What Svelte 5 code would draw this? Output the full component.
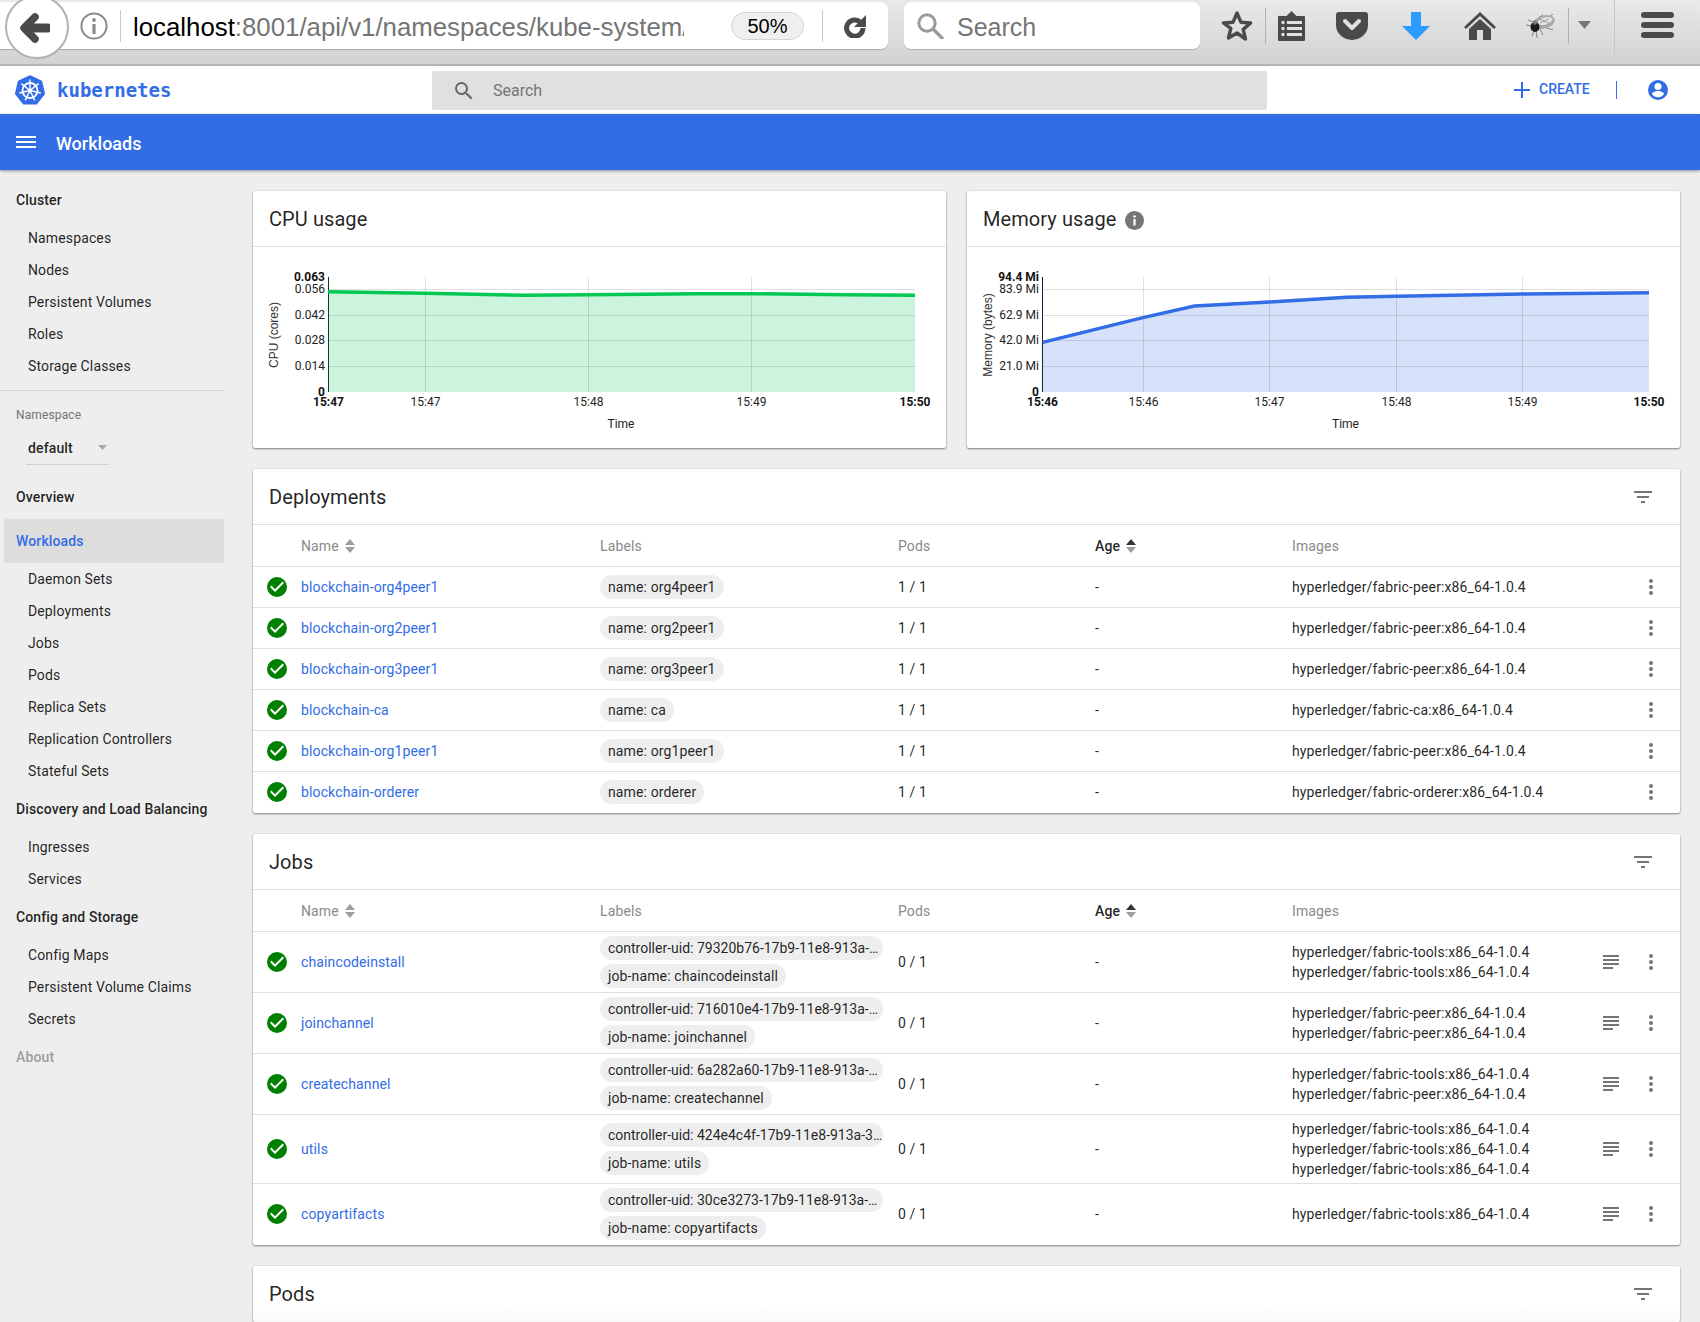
<script>
  const sideGroups = [
    { head: 'Cluster', items: ['Namespaces', 'Nodes', 'Persistent Volumes', 'Roles', 'Storage Classes'] },
  ];
  const sideGroups2 = [
    { head: 'Overview', items: [] },
    { head: 'Workloads', active: true, items: ['Daemon Sets', 'Deployments', 'Jobs', 'Pods', 'Replica Sets', 'Replication Controllers', 'Stateful Sets'] },
    { head: 'Discovery and Load Balancing', items: ['Ingresses', 'Services'] },
    { head: 'Config and Storage', items: ['Config Maps', 'Persistent Volume Claims', 'Secrets'] },
    { head: 'About', muted: true, items: [] },
  ];

  const deployments = [
    { name: 'blockchain-org4peer1', labels: ['name: org4peer1'], images: ['hyperledger/fabric-peer:x86_64-1.0.4'] },
    { name: 'blockchain-org2peer1', labels: ['name: org2peer1'], images: ['hyperledger/fabric-peer:x86_64-1.0.4'] },
    { name: 'blockchain-org3peer1', labels: ['name: org3peer1'], images: ['hyperledger/fabric-peer:x86_64-1.0.4'] },
    { name: 'blockchain-ca', labels: ['name: ca'], images: ['hyperledger/fabric-ca:x86_64-1.0.4'] },
    { name: 'blockchain-org1peer1', labels: ['name: org1peer1'], images: ['hyperledger/fabric-peer:x86_64-1.0.4'] },
    { name: 'blockchain-orderer', labels: ['name: orderer'], images: ['hyperledger/fabric-orderer:x86_64-1.0.4'] },
  ];
  const tools = 'hyperledger/fabric-tools:x86_64-1.0.4';
  const peer = 'hyperledger/fabric-peer:x86_64-1.0.4';
  const jobs = [
    { name: 'chaincodeinstall', labels: ['controller-uid: 79320b76-17b9-11e8-913a-0242ac110005', 'job-name: chaincodeinstall'], images: [tools, tools] },
    { name: 'joinchannel', labels: ['controller-uid: 716010e4-17b9-11e8-913a-0242ac110005', 'job-name: joinchannel'], images: [peer, peer] },
    { name: 'createchannel', labels: ['controller-uid: 6a282a60-17b9-11e8-913a-0242ac110005', 'job-name: createchannel'], images: [tools, peer] },
    { name: 'utils', labels: ['controller-uid: 424e4c4f-17b9-11e8-913a-3c2a0f110005', 'job-name: utils'], images: [tools, tools, tools] },
    { name: 'copyartifacts', labels: ['controller-uid: 30ce3273-17b9-11e8-913a-0242ac110005', 'job-name: copyartifacts'], images: [tools] },
  ];

  const cpu = {
    box: '253 247 693 201', w: 693, left: 328.5, right: 915, labelX: 325,
    color: '#00c853', fill: '#ccf3de', axisColor: '#0b3d20',
    yTitle: 'CPU (cores)', yTitleX: 278, timeX: 621,
    top: '0.063',
    yTicks: [[289, '0.056'], [315, '0.042'], [340, '0.028'], [366, '0.014']],
    xGrid: [[425.5, '15:47'], [588.5, '15:48'], [751.5, '15:49']],
    first: '15:47', last: '15:50',
    line: [[328, 291.7], [425.5, 293.3], [524.7, 295.3], [588.5, 294.7], [699, 293.7], [751.5, 293.7], [846, 294.7], [915, 295.3]],
  };
  const mem = {
    box: '967 247 713 201', w: 713, left: 1042.5, right: 1649, labelX: 1039,
    color: '#326de6', fill: '#d6e2f9', axisColor: '#14233f',
    yTitle: 'Memory (bytes)', yTitleX: 992, timeX: 1345.5,
    top: '94.4 Mi',
    yTicks: [[289, '83.9 Mi'], [315, '62.9 Mi'], [340, '42.0 Mi'], [366, '21.0 Mi']],
    xGrid: [[1143.5, '15:46'], [1269.5, '15:47'], [1396.5, '15:48'], [1522.5, '15:49']],
    first: '15:46', last: '15:50',
    line: [[1042.6, 342.3], [1143, 317.7], [1194.5, 306], [1269.6, 302], [1347, 297.3], [1396.5, 296.3], [1522.5, 294], [1649, 292.7]],
  };
  const pts = (c) => c.line.map((p) => p.join(',')).join(' ');
  const area = (c) => `${c.left},392 ${pts(c)} ${c.right},392`;

  const spokes = [0, 1, 2, 3, 4, 5, 6].map((i) => {
    const a = (i * 2 * Math.PI) / 7 - Math.PI / 2;
    return { x: 15 + Math.cos(a) * 11, y: 15.5 + Math.sin(a) * 11 };
  });
</script>

{#snippet sort(active)}
  <svg class="sort" viewBox="0 0 10 14" width="10" height="14">
    <path d="M5 0l5 6H0z" fill={active ? '#333' : '#9e9e9e'} />
    <path d="M5 14L0 8h10z" fill="#9e9e9e" />
  </svg>
{/snippet}

{#snippet filter()}
  <svg class="filter" viewBox="0 0 24 24" width="24" height="24"><path d="M10 18h4v-2h-4v2zM3 6v2h18V6H3zm3 7h12v-2H6v2z" fill="#757575" /></svg>
{/snippet}

{#snippet chart(c)}
  <svg class="chart" viewBox={c.box} width={c.w} height="201">
    <polygon points={area(c)} fill={c.fill} />
    {#each c.yTicks as t}
      <line x1={c.left} x2={c.right} y1={t[0] + 0.5} y2={t[0] + 0.5} stroke="#000" stroke-opacity="0.12" />
      <text class="tick" x={c.labelX} y={t[0] + 4} text-anchor="end">{t[1]}</text>
    {/each}
    {#each c.xGrid as t}
      <line x1={t[0]} x2={t[0]} y1="277" y2="392" stroke="#000" stroke-opacity="0.12" />
      <text class="tick" x={t[0]} y="406" text-anchor="middle">{t[1]}</text>
    {/each}
    <line x1={c.left} x2={c.left} y1="277" y2="392" stroke={c.axisColor} />
    <polyline points={pts(c)} fill="none" stroke={c.color} stroke-width="3.4" />
    <text class="tick bold" x={c.labelX} y="281" text-anchor="end">{c.top}</text>
    <text class="tick bold" x={c.labelX} y="396" text-anchor="end">0</text>
    <text class="tick bold" x={c.left} y="406" text-anchor="middle">{c.first}</text>
    <text class="tick bold" x={c.right} y="406" text-anchor="middle">{c.last}</text>
    <text class="tick" x={c.timeX} y="428" text-anchor="middle">Time</text>
    <text class="axis" transform={`translate(${c.yTitleX} 335) rotate(-90)`} text-anchor="middle">{c.yTitle}</text>
  </svg>
{/snippet}

{#snippet tableCard(title, rows, withLogs)}
  <section class="card table-card">
    <header class="card-head">
      <h2>{title}</h2>
      {@render filter()}
    </header>
    <div class="row thead">
      <span></span>
      <span class="th">Name {@render sort(false)}</span>
      <span class="th">Labels</span>
      <span class="th">Pods</span>
      <span class="th strong">Age {@render sort(true)}</span>
      <span class="th">Images</span>
    </div>
    {#each rows as r}
      <div class="row">
        <svg class="ok" viewBox="0 0 24 24" width="24" height="24"><path d="M12 2a10 10 0 1 0 0 20 10 10 0 0 0 0-20zm-2 15l-5-5 1.41-1.41L10 14.17l7.59-7.59L19 8l-9 9z" fill="#008000" /></svg>
        <a class="link" href="#top">{r.name}</a>
        <div class="chips">
          {#each r.labels as l}<span class="chip">{l}</span>{/each}
        </div>
        <span>{withLogs ? '0 / 1' : '1 / 1'}</span>
        <span>-</span>
        <div class="images">
          {#each r.images as i}<div>{i}</div>{/each}
        </div>
        <span class="act">
          {#if withLogs}
            <svg viewBox="0 0 24 24" width="24" height="24"><path d="M4 5h16v2H4zM4 9h16v2H4zM4 13h16v2H4zM4 17h10v2H4z" fill="#757575" /></svg>
          {/if}
        </span>
        <span class="act">
          <svg viewBox="0 0 24 24" width="24" height="24"><path d="M12 8a2 2 0 1 0 0-4 2 2 0 0 0 0 4zm0 2a2 2 0 1 0 0 4 2 2 0 0 0 0-4zm0 6a2 2 0 1 0 0 4 2 2 0 0 0 0-4z" fill="#757575" /></svg>
        </span>
      </div>
    {/each}
  </section>
{/snippet}

<div class="page">
  <div class="chrome">
    <div class="back">
      <svg viewBox="0 0 30 32" width="30" height="32">
        <path d="M15 5L4 16l11 11" fill="none" stroke="#4a4a4a" stroke-width="7.500" stroke-linecap="round" stroke-linejoin="round" />
        <path d="M7 16h21" stroke="#4a4a4a" stroke-width="9" stroke-linecap="round" fill="none" />
      </svg>
    </div>
    <div class="addr">
      <svg class="info" viewBox="0 0 28 28" width="28" height="28">
        <circle cx="14" cy="14" r="12.6" fill="none" stroke="#8a8a8a" stroke-width="2" />
        <circle cx="14" cy="8" r="1.9" fill="#8a8a8a" />
        <rect x="12.4" y="12" width="3.2" height="10" fill="#8a8a8a" />
      </svg>
      <i class="vr"></i>
      <div class="url"><b>localhost</b>:8001/api/v1/namespaces/kube-system/</div>
      <span class="zoom-pill">50%</span>
      <i class="vr vr2"></i>
      <svg class="reload" viewBox="0 0 24 24" width="24" height="24">
        <path d="M17.500 8.200A8.200 8.200 0 1 0 20 14" fill="none" stroke="#4a4a4a" stroke-width="5" />
        <path d="M23 1v12H11z" fill="#4a4a4a" />
      </svg>
    </div>
    <div class="ffsearch">
      <svg viewBox="0 0 30 26" width="30" height="26">
        <circle cx="11" cy="10" r="8.2" fill="none" stroke="#9b9b9b" stroke-width="3" />
        <path d="M17 16l9 9" stroke="#9b9b9b" stroke-width="3.4" stroke-linecap="round" />
      </svg>
      <span>Search</span>
    </div>
    <div class="tools">
      <svg class="t-star" viewBox="0 0 32 32" width="32" height="32"><path d="M16 3l3.900 9.200 9.700.8-7.400 6.400 2.300 9.600L16 23l-8.500 5 2.300-9.600L2.400 13l9.700-.8z" fill="none" stroke="#4a4a4a" stroke-width="3.4" stroke-linejoin="round" /></svg>
      <i class="tvr t-a"></i>
      <svg class="t-read" viewBox="0 0 27 30" width="27" height="30">
        <path d="M13.500 0l5 5H26a1 1 0 0 1 1 1v23a1 1 0 0 1-1 1H1a1 1 0 0 1-1-1V6a1 1 0 0 1 1-1h7.500z" fill="#4a4a4a" />
        <g fill="#e0e0e0"><rect x="9" y="10" width="15" height="3" /><rect x="9" y="16" width="15" height="3" /><rect x="9" y="22" width="15" height="3" /><circle cx="5" cy="11.500" r="1.700" /><circle cx="5" cy="17.500" r="1.700" /><circle cx="5" cy="23.500" r="1.700" /></g>
      </svg>
      <svg class="t-pocket" viewBox="0 0 32 28" width="32" height="28">
        <path d="M3 0h26a3 3 0 0 1 3 3v10a16 15 0 0 1-32 0V3a3 3 0 0 1 3-3z" fill="#4a4a4a" />
        <path d="M9 9l7 7 7-7" fill="none" stroke="#e0e0e0" stroke-width="4" stroke-linecap="round" stroke-linejoin="round" />
      </svg>
      <svg class="t-down" viewBox="0 0 28 28" width="28" height="28"><path d="M9 1a1 1 0 0 1 1-1h8a1 1 0 0 1 1 1v13h9L14 28 0 14h9z" fill="#2e9bff" /></svg>
      <svg class="t-home" viewBox="0 0 32 28" width="32" height="28">
        <path d="M16 0L0 15l2 2L16 4l14 13 2-2z" fill="#4a4a4a" />
        <path d="M16 7L5 17v11h8V18h6v10h8V17z" fill="#4a4a4a" />
      </svg>
      <svg class="t-bug" viewBox="0 0 30 24" width="30" height="24">
        <g stroke="#6a6a6a" stroke-width="0.8" fill="none">
          <path d="M6 12L0 11M7 8L2 6M10 16l1 8M14 15l3 6M18 13l9 3M8 17l-2 5M12 4l5-3M23 3l4-3" />
        </g>
        <ellipse cx="18" cy="8" rx="11" ry="6.500" transform="rotate(-15 18 8)" fill="#a9a9a9" />
        <ellipse cx="19" cy="7" rx="7.500" ry="3.500" transform="rotate(-15 19 7)" fill="#e2e2e2" />
        <path d="M13 5l10 4M14 9l9-4" stroke="#888" stroke-width="0.7" />
        <ellipse cx="9" cy="13" rx="4.500" ry="5" fill="#1c1c1c" />
        <circle cx="9" cy="8.500" r="2.200" fill="#777" />
      </svg>
      <i class="tvr t-b"></i>
      <svg class="t-tri" viewBox="0 0 13 8" width="13" height="8"><path d="M0 0h13l-6.500 8z" fill="#777" /></svg>
      <i class="tvr t-c"></i>
      <svg class="t-ham" viewBox="0 0 33 26" width="33" height="26"><g fill="#4a4a4a"><rect width="33" height="6" rx="3" /><rect y="10" width="33" height="6" rx="3" /><rect y="20" width="33" height="6" rx="3" /></g></svg>
    </div>
  </div>

  <div class="toolbar">
    <div class="brand">
      <svg viewBox="0 0 30 30" width="30" height="30">
        <polygon points="15,1 26.500,6.500 29.300,18.800 21.400,28.800 8.600,28.800 0.700,18.800 3.500,6.500" fill="#326de6" stroke="#326de6" stroke-width="1.500" stroke-linejoin="round" />
        <circle cx="15" cy="15.500" r="7.500" fill="none" stroke="#fff" stroke-width="1.800" />
        {#each spokes as s}<line x1="15" y1="15.500" x2={s.x} y2={s.y} stroke="#fff" stroke-width="1.400" />{/each}
        <circle cx="15" cy="15.500" r="2" fill="#fff" />
      </svg>
      <span class="wordmark">kubernetes</span>
    </div>
    <div class="search">
      <svg viewBox="0 0 24 24" width="24" height="24"><path d="M15.500 14h-.79l-.28-.27A6.470 6.470 0 0 0 16 9.500 6.500 6.500 0 1 0 9.500 16c1.610 0 3.090-.59 4.230-1.570l.27.28v.79l5 4.990L20.490 19l-4.990-5zm-6 0C7.010 14 5 11.990 5 9.500S7.010 5 9.500 5 14 7.010 14 9.500 11.990 14 9.500 14z" fill="#666" /></svg>
      <span>Search</span>
    </div>
    <div class="actions">
      <svg viewBox="0 0 16 16" width="16" height="16"><path d="M7 0h2v7h7v2H9v7H7V9H0V7h7z" fill="#326de6" /></svg>
      <span class="create">CREATE</span>
      <i class="act-vr"></i>
      <svg viewBox="0 0 24 24" width="24" height="24"><path d="M12 2a10 10 0 1 0 0 20 10 10 0 0 0 0-20zm0 3a3.500 3.500 0 1 1 0 7 3.500 3.500 0 0 1 0-7zm0 14.200a7.200 7.200 0 0 1-6-3.220c.03-2 4-3.080 6-3.080s5.970 1.090 6 3.080a7.200 7.200 0 0 1-6 3.220z" fill="#326de6" /></svg>
    </div>
  </div>

  <div class="titlebar">
    <svg viewBox="0 0 20 12" width="20" height="12"><path d="M0 0h20v2H0zM0 5h20v2H0zM0 10h20v2H0z" fill="#fff" /></svg>
    <span>Workloads</span>
  </div>

  <div class="main">
    <nav class="side">
      {#each sideGroups as g}
        <div class="head">{g.head}</div>
        {#each g.items as it}<div class="item">{it}</div>{/each}
      {/each}
      <hr />
      <div class="ns">
        <div class="ns-label">Namespace</div>
        <div class="ns-select">
          <span>default</span>
          <svg viewBox="0 0 9 5" width="9" height="5"><path d="M0 0h9L4.500 5z" fill="#a8a8a8" /></svg>
        </div>
      </div>
      {#each sideGroups2 as g}
        <div class="head" class:active={g.active} class:muted={g.muted}>{g.head}</div>
        {#each g.items as it}<div class="item">{it}</div>{/each}
      {/each}
    </nav>

    <div class="content">
      <div class="charts">
        <section class="card">
          <header class="card-head"><h2>CPU usage</h2></header>
          {@render chart(cpu)}
        </section>
        <section class="card">
          <header class="card-head">
            <h2>Memory usage</h2>
            <svg class="minfo" viewBox="0 0 19 19" width="19" height="19">
              <circle cx="9.500" cy="9.500" r="9.500" fill="#757575" />
              <circle cx="9.500" cy="5.500" r="1.300" fill="#fff" />
              <rect x="8.400" y="8" width="2.200" height="6.500" fill="#fff" />
            </svg>
          </header>
          {@render chart(mem)}
        </section>
      </div>

      {@render tableCard('Deployments', deployments, false)}
      {@render tableCard('Jobs', jobs, true)}

      <section class="card pods">
        <header class="card-head">
          <h2>Pods</h2>
          {@render filter()}
        </header>
      </section>
    </div>
  </div>
</div>

<style>
  :global(body) {
    margin: 0;
    background: #eee;
  }
  .page {
    height: 1322px;
    overflow: hidden;
    display: flex;
    flex-direction: column;
    font-family: Roboto, 'Liberation Sans', sans-serif;
    font-size: 14px;
    letter-spacing: 0.13px;
    color: rgba(0, 0, 0, 0.87);
    background: #eee;
  }

  /* browser chrome */
  .chrome {
    position: relative;
    flex: none;
    height: 64px;
    box-sizing: content-box;
    border-bottom: 2px solid #b4b4b4;
    background: linear-gradient(#e9e9e9, #d2d2d2);
    display: flex;
    align-items: flex-start;
    padding: 0;
    font-family: 'Liberation Sans', sans-serif;
    letter-spacing: 0;
  }
  .back {
    position: absolute;
    left: 5px;
    top: -5px;
    width: 58px;
    height: 58px;
    border: 2px solid #b2b2b2;
    border-radius: 50%;
    background: #fff;
    z-index: 1;
    display: flex;
    align-items: center;
    justify-content: center;
    padding-top: 2px;
    padding-right: 2px;
    box-sizing: content-box;
  }
  .back svg {
    margin-left: -2px;
  }
  .addr {
    margin-top: 2px;
    width: 888px;
    height: 48px;
    box-sizing: border-box;
    background: #fff;
    border-bottom: 1px solid #a9a9a9;
    border-radius: 0 7px 7px 0;
    display: flex;
    align-items: center;
    padding-left: 80px;
  }
  .info {
    flex: none;
  }
  .vr {
    flex: none;
    width: 1px;
    height: 32px;
    margin: 0 12px;
    background: #c8c8c8;
  }
  .url {
    flex: none;
    width: 551px;
    overflow: hidden;
    white-space: nowrap;
    font-size: 25.8px;
    padding-top: 3px;
    color: #757575;
  }
  .url b {
    font-weight: 400;
    color: #000;
  }
  .zoom-pill {
    flex: none;
    margin-left: 47px;
    width: 73px;
    height: 28px;
    box-sizing: border-box;
    border: 1px solid #d4d4d4;
    border-radius: 14px;
    background: #efefef;
    font-size: 20px;
    color: #000;
    text-align: center;
    line-height: 26px;
  }
  .vr2 {
    margin: 0 0 0 18px;
  }
  .reload {
    flex: none;
    margin-left: 20px;
  }
  .ffsearch {
    margin: 2px 0 0 16px;
    width: 296px;
    height: 48px;
    box-sizing: border-box;
    background: #fff;
    border-bottom: 1px solid #b0b0b0;
    border-radius: 7px;
    display: flex;
    align-items: center;
    padding-left: 12px;
    gap: 11px;
    font-size: 25px;
    color: #757575;
  }
  .ffsearch span {
    padding-top: 3px;
  }
  .tools {
    margin-top: 2px;
    height: 48px;
    display: flex;
    align-items: center;
  }
  .tools svg,
  .tools i {
    flex: none;
  }
  .tvr {
    width: 1px;
    height: 36px;
    background: #b0b0b0;
  }
  .t-star { margin-left: 21px; }
  .t-a { margin-left: 12px; }
  .t-read { margin-left: 12px; }
  .t-pocket { margin-left: 31px; }
  .t-down { margin-left: 34px; }
  .t-home { margin-left: 34px; }
  .t-bug { margin-left: 30px; }
  .t-b { margin-left: 12px; }
  .t-tri { margin-left: 9px; margin-top: -2px; }
  .t-c {
    margin-left: 23px;
    height: 64px;
    margin-top: 12px;
    margin-bottom: -2px;
    align-self: center;
    background: #c6c6c6;
    position: relative;
    top: -7px;
  }
  .t-ham { margin-left: 26px; margin-top: -2px; }

  /* app toolbar */
  .toolbar {
    flex: none;
    height: 48px;
    background: #fff;
    display: flex;
    align-items: center;
  }
  .brand {
    width: 432px;
    display: flex;
    align-items: center;
    padding-left: 15px;
    box-sizing: border-box;
    gap: 12px;
  }
  .wordmark {
    font-family: 'DejaVu Sans Mono', monospace;
    font-weight: 700;
    font-size: 19px;
    letter-spacing: 0;
    color: #326de6;
  }
  .search {
    width: 835px;
    height: 39px;
    margin-top: 1px;
    background: #e0e0e0;
    border-radius: 2px;
    display: flex;
    align-items: center;
    padding-left: 20px;
    box-sizing: border-box;
    gap: 17px;
    font-size: 16px;
    letter-spacing: 0;
    color: #757575;
  }
  .actions {
    margin-left: auto;
    padding-right: 30px;
    display: flex;
    align-items: center;
  }
  .create {
    margin-left: 9px;
    color: #326de6;
    font-weight: 500;
    font-size: 14px;
    letter-spacing: 0;
    width: 52px;
    position: relative;
    top: -1px;
  }
  .act-vr {
    width: 1px;
    height: 18px;
    background: #326de6;
    margin: 0 29px 0 25px;
  }

  .titlebar {
    flex: none;
    height: 56px;
    box-sizing: border-box;
    padding-top: 2px;
    background: #326de6;
    box-shadow: 0 1px 3px rgba(0, 0, 0, 0.4);
    display: flex;
    align-items: center;
    padding-left: 16px;
    gap: 20px;
    color: #fff;
    font-size: 18px;
    font-weight: 500;
    letter-spacing: 0;
    position: relative;
    z-index: 2;
  }
  .titlebar svg {
    margin-top: -2px;
  }

  .main {
    flex: 1;
    display: flex;
    min-height: 0;
  }

  /* sidebar */
  .side {
    flex: none;
    width: 224px;
    box-sizing: border-box;
    padding-top: 8px;
    background: #eee;
  }
  .head {
    height: 44px;
    line-height: 44px;
    padding-left: 16px;
    font-weight: 500;
  }
  .head.active {
    margin-left: 4px;
    padding-left: 12px;
    background: #ddd;
    border-radius: 2px;
    color: #326de6;
  }
  .head.muted {
    color: #9e9e9e;
  }
  .item {
    height: 32px;
    line-height: 32px;
    padding-left: 28px;
  }
  hr {
    margin: 8px 0 0;
    border: 0;
    border-top: 1px solid #d4d4d4;
  }
  .ns {
    height: 84px;
    box-sizing: border-box;
    padding-top: 16px;
  }
  .ns-label {
    padding-left: 16px;
    font-size: 12px;
    line-height: 16px;
    color: #757575;
  }
  .ns-select {
    margin: 8px 0 0 26px;
    width: 83px;
    height: 34px;
    box-sizing: border-box;
    padding: 0 2px;
    border-bottom: 1px solid #d0d0d0;
    display: flex;
    align-items: center;
    justify-content: space-between;
    font-weight: 500;
  }

  /* content */
  .content {
    flex: 1;
    min-width: 0;
    box-sizing: border-box;
    padding: 21px 20px 0 29px;
    display: flex;
    flex-direction: column;
    gap: 20px;
  }
  .charts {
    display: grid;
    grid-template-columns: 693px 713px;
    gap: 21px;
    margin-bottom: 1px;
  }
  .card {
    background: #fff;
    border-radius: 2px;
    box-shadow: 0 1px 2px rgba(0, 0, 0, 0.45), 0 0 2px rgba(0, 0, 0, 0.12);
  }
  .table-card {
    padding-bottom: 1px;
    margin-bottom: 1px;
  }
  .card-head {
    height: 55px;
    box-sizing: content-box;
    border-bottom: 1px solid #e0e0e0;
    padding: 0 25px 0 16px;
    display: flex;
    align-items: center;
  }
  h2 {
    margin: 0;
    font-size: 20px;
    font-weight: 400;
    letter-spacing: 0.08px;
  }
  .filter {
    margin-left: auto;
  }
  .minfo {
    margin-left: 9px;
    margin-top: 4px;
  }
  .chart {
    display: block;
    letter-spacing: 0;
  }
  .tick {
    font-family: Roboto, sans-serif;
    font-size: 12px;
    fill: #222;
  }
  .tick.bold {
    font-weight: 700;
    fill: #111;
  }
  .axis {
    font-family: 'Liberation Sans', sans-serif;
    font-size: 12px;
    fill: #333;
  }

  .row {
    display: grid;
    grid-template-columns: 48px 299px 298px 197px 197px 1fr 48px 32px;
    padding-right: 13px;
    align-items: center;
    min-height: 41px;
    box-sizing: border-box;
    border-top: 1px solid #e0e0e0;
  }
  .row.thead {
    border-top: 0;
  }
  .th {
    color: #8a8a8a;
    display: flex;
    align-items: center;
    gap: 6px;
  }
  .th.strong {
    color: rgba(0, 0, 0, 0.87);
    font-weight: 500;
  }
  .sort {
    flex: none;
  }
  .ok {
    margin-left: 12px;
    display: block;
  }
  .link {
    color: #326de6;
    text-decoration: none;
  }
  .chips {
    display: flex;
    flex-direction: column;
    align-items: flex-start;
    gap: 4px;
    padding: 4px 0;
    min-width: 0;
  }
  .chip {
    box-sizing: border-box;
    max-width: 283px;
    height: 24px;
    line-height: 24px;
    padding: 0 8px;
    background: #eee;
    border-radius: 12px;
    white-space: nowrap;
    overflow: hidden;
    text-overflow: ellipsis;
  }
  .chips .chip:first-child:not(:last-child) {
    padding-right: 0;
    letter-spacing: 0;
  }
  .images {
    line-height: 20px;
    padding: 4px 0;
  }
  .act {
    display: flex;
    justify-content: center;
  }
  .pods {
    flex: 1;
    background: linear-gradient(#fff 0, #fff 36px, #f8f8f8 56px);
  }
  .pods .card-head {
    border-bottom: 0;
  }
</style>
